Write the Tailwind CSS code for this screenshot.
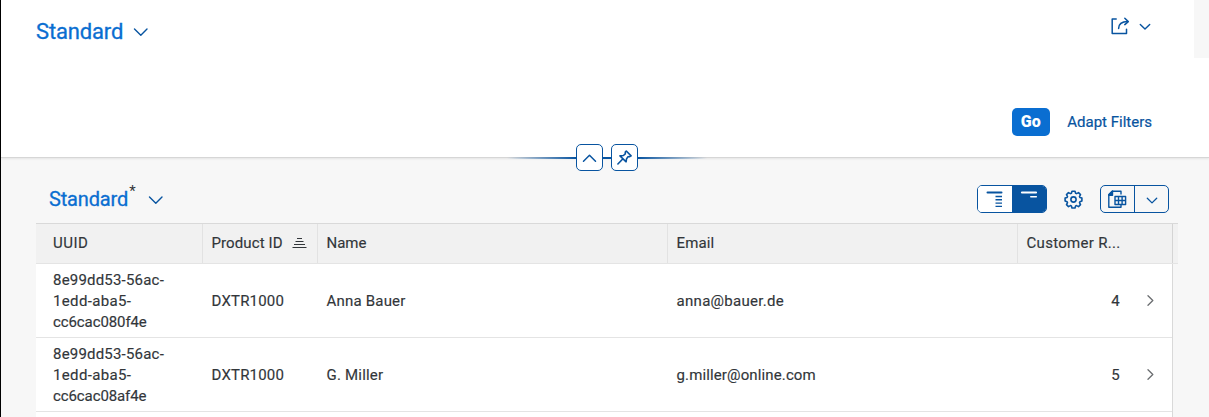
<!DOCTYPE html>
<html lang="en">
<head>
<meta charset="utf-8">
<title>Standard</title>
<script src="https://cdn.jsdelivr.net/npm/@tailwindcss/browser@4"></script>
</head>
<body class="w-[1209px] h-[417px] overflow-hidden bg-[#f7f7f7] border-l border-black font-['Roboto','Liberation_Sans',sans-serif] text-[15px] leading-[21px] text-[#32363a]">
  <header class="relative h-[158px] bg-white border-b border-[#d6d6d6] shadow-[0_1px_2px_rgba(0,0,0,0.08)]">
    <div class="flex justify-between h-[58px]">
      <div class="flex items-center pl-[35px] pt-[5px] h-[58px]">
        <h1 class="text-[22px] leading-[28px] font-normal tracking-[-0.15px] text-[#0a6ed1] [-webkit-text-stroke:0.3px_#0a6ed1]">Standard</h1>
        <svg class="ml-[10px]" width="16" height="10" viewBox="0 0 16 10" fill="none" stroke="#0854a0" stroke-width="1.4" stroke-linecap="round" stroke-linejoin="round"><path d="M1.5 2 7.8 8.2 14 2"/></svg>
      </div>
      <div class="flex">
        <div class="flex pt-[16px] pr-[43px] gap-[9px]">
          <svg width="20" height="20" viewBox="0 0 20 20" fill="none" stroke="#0854a0" stroke-width="1.5" stroke-linecap="round" stroke-linejoin="round"><path d="M6.2 3H2.2V17.4H16.5V13.2"/><path d="M8.6 12.6C8.6 8.2 11.3 5.8 17.7 5.6"/><path d="M14.8 2.3 18.3 5.6 14.8 8.6"/></svg>
          <svg class="mt-[7px]" width="12" height="8" viewBox="0 0 12 8" fill="none" stroke="#0854a0" stroke-width="1.4" stroke-linecap="round" stroke-linejoin="round"><path d="M1.3 1.5 6 6.1 10.7 1.5"/></svg>
        </div>
        <div class="w-[15px] bg-[#f7f7f7]"></div>
      </div>
    </div>
    <div class="flex justify-end items-center pt-[50px] pr-[57px] gap-[17px]">
      <button class="w-[38px] h-[28px] pb-[1px] pr-[1px] rounded-[5px] bg-[#0a6ed1] text-white font-black text-[16px]">Go</button>
      <a class="text-[#0854a0] [-webkit-text-stroke:0.2px_#0854a0]">Adapt Filters</a>
    </div>
    <div class="absolute left-[506px] top-[144px] w-[200px] h-[27px] flex items-center">
      <span class="h-[2px] w-[69px] bg-linear-to-r from-transparent to-[#0854a0]"></span>
      <button class="w-[27px] h-[27px] rounded-[5px] border border-[#0854a0] bg-white flex items-center justify-center"><svg width="16" height="10" viewBox="0 0 16 10" fill="none" stroke="#0854a0" stroke-width="1.5" stroke-linecap="round" stroke-linejoin="round"><path d="M1.5 8.2 7.5 2.2 13.5 8.2"/></svg></button>
      <span class="h-[2px] w-[8px] bg-[#0854a0]"></span>
      <button class="w-[27px] h-[27px] rounded-[5px] border border-[#0854a0] bg-white flex items-center justify-center"><svg width="16" height="16" viewBox="0.5 0.5 16 16" fill="none" stroke="#0854a0" stroke-width="1.6" stroke-linecap="round" stroke-linejoin="round"><path d="M9.8 1.5 14.6 6.4 13.3 7.1 11.5 7.2 10 9.4 9.6 12.3 3.5 6.4 6.9 6 8.8 4.3 8.8 2.6ZM6 9.8 1.4 14.5"/></svg></button>
      <span class="h-[2px] w-[69px] bg-linear-to-r from-[#0854a0] to-transparent"></span>
    </div>
  </header>

  <main class="pl-[35px]">
    <div class="flex justify-between h-[65px] w-[1133px]">
      <div class="flex pl-[13px] pt-[27px]">
        <h2 class="text-[20px] leading-[28px] font-normal tracking-[-0.15px] text-[#0a6ed1] [-webkit-text-stroke:0.3px_#0a6ed1]">Standard</h2>
        <span class="text-[15px] leading-[16px] ml-[1px] -mt-[2px]">*</span>
        <svg class="ml-[12px] mt-[10px]" width="16" height="10" viewBox="0 0 16 10" fill="none" stroke="#0854a0" stroke-width="1.4" stroke-linecap="round" stroke-linejoin="round"><path d="M1.5 2 7.8 8.2 14 2"/></svg>
      </div>
      <div class="flex pt-[27px]">
        <div class="flex w-[70px] h-[28px] rounded-[5px] border border-[#0854a0] overflow-hidden">
          <span class="w-[34px] bg-white"><svg width="34" height="26" viewBox="0 0 34 26" fill="none" stroke="#0854a0"><path d="M9.5 6.5H23.5" stroke-width="2" stroke-linecap="round"/><path d="M17.5 10.5H24M17.5 13.8H24M17.5 17.1H24M17.5 20.4H24" stroke-width="1.4"/></svg></span>
          <span class="w-[34px] bg-[#0854a0]"><svg width="34" height="26" viewBox="0 0 34 26" fill="none" stroke="#fff" stroke-linecap="round"><path d="M10 6.5H24" stroke-width="2.2"/><path d="M18.8 10.7H24.3" stroke-width="1.6"/></svg></span>
        </div>
        <svg class="ml-[17px] mt-[5px]" width="19" height="19" viewBox="0 0 19 19" fill="none" stroke="#0854a0" stroke-width="1.6" stroke-linejoin="round"><circle cx="9.5" cy="9.5" r="2.6"/><path d="M8 1.2h3l.6 2 1 .4 1.9-1 2 2-1 1.9.4 1 2 .6v3l-2 .6-.4 1 1 1.9-2 2-1.9-1-1 .4-.6 2H8l-.6-2-1-.4-1.9 1-2-2 1-1.9-.4-1-2-.6v-3l2-.6.4-1-1-1.9 2-2 1.9 1 1-.4Z"/></svg>
        <div class="ml-[17px] flex w-[69px] h-[28px] rounded-[5px] border border-[#0854a0]">
          <span class="w-[34px] border-r border-[#0854a0]"><svg width="33" height="26" viewBox="0 0 33 26" fill="none" stroke="#0854a0" stroke-width="1.4" stroke-linejoin="round"><path d="M20 8.5V5.2H11.3L7.8 9V21.3H20V19"/><path d="M7.8 9.2V8.5L11.5 5V9.2Z" fill="#0854a0"/><path d="M14 10.5H24.6V18.5H14ZM14 14.5H24.6M17.5 10.5V18.5M21.1 10.5V18.5"/></svg></span>
          <span class="flex-1 flex items-center justify-center"><svg class="mt-[4px]" width="12" height="8" viewBox="0 0 12 8" fill="none" stroke="#0854a0" stroke-width="1.3" stroke-linecap="round" stroke-linejoin="round"><path d="M1.3 1.3 6 5.9 10.7 1.3"/></svg></span>
        </div>
      </div>
    </div>

    <div class="w-[1142px] tracking-[0.2px]">
      <div class="flex h-[41px] bg-[#f1f1f1] border-t border-b border-t-[#d9d9d9] border-b-[#e4e4e4] [&>div]:pt-[9px] [-webkit-text-stroke:0.15px_#32363a]">
        <div class="w-[167px] pl-[17px] border-r border-[#e2e2e2]"><span class="tracking-[0.5px]">UUID</span></div>
        <div class="w-[115px] pl-[8.5px] border-r border-[#e2e2e2] flex"><span class="w-[72.5px] tracking-[0.1px]">Product ID</span><svg class="ml-[8px] mt-[5px]" width="15" height="12" viewBox="0 0 15 12" stroke="#32363a" stroke-width="1.1"><path d="M5 .5H10M3.5 3.5H11.5M2 6.5H13M.5 9.5H14.5"/></svg></div>
        <div class="w-[350px] pl-[8.5px] border-r border-[#e2e2e2]"><span class="tracking-normal">Name</span></div>
        <div class="w-[350px] pl-[8.5px] border-r border-[#e2e2e2]"><span class="tracking-[0.1px]">Email</span></div>
        <div class="w-[155px] pl-[8.5px] border-r border-[#d4d4d4]"><span class="tracking-[0.3px]">Customer R...</span></div>
      </div>
      <div class="w-[1137px] border-r border-[#d9d9d9] bg-white [-webkit-text-stroke:0.15px_#32363a]">
        <div class="flex items-center h-[74px] border-b border-[#e4e4e4] [&>div]:pt-[2px]">
          <div class="w-[167px] pl-[17px]">8e99dd53-56ac-<br><span class="tracking-[0.35px]">1edd-aba5-</span><br><span class="tracking-[-0.1px]">cc6cac080f4e</span></div>
          <div class="w-[115px] pl-[8.5px]"><span>DXTR1000</span></div>
          <div class="w-[350px] pl-[8.5px]"><span>Anna Bauer</span></div>
          <div class="w-[350px] pl-[8.5px]"><span class="tracking-[0.3px]">anna@bauer.de</span></div>
          <div class="w-[102px] text-right">4</div>
          <svg class="ml-[26px]" width="9" height="12" viewBox="0 0 9 12" fill="none" stroke="#6a6d70" stroke-width="1.3" stroke-linecap="round" stroke-linejoin="round"><path d="M2 .8 6.8 5.5 2 10.2"/></svg>
        </div>
        <div class="flex items-center h-[74px] border-b border-[#e4e4e4] [&>div]:pt-[2px]">
          <div class="w-[167px] pl-[17px]">8e99dd53-56ac-<br><span class="tracking-[0.35px]">1edd-aba5-</span><br><span class="tracking-[-0.1px]">cc6cac08af4e</span></div>
          <div class="w-[115px] pl-[8.5px]"><span>DXTR1000</span></div>
          <div class="w-[350px] pl-[8.5px]"><span>G. Miller</span></div>
          <div class="w-[350px] pl-[8.5px]"><span class="tracking-[0.13px]">g.miller@online.com</span></div>
          <div class="w-[102px] text-right">5</div>
          <svg class="ml-[26px]" width="9" height="12" viewBox="0 0 9 12" fill="none" stroke="#6a6d70" stroke-width="1.3" stroke-linecap="round" stroke-linejoin="round"><path d="M2 .8 6.8 5.5 2 10.2"/></svg>
        </div>
        <div class="h-[5px]"></div>
      </div>
    </div>
  </main>
</body>
</html>
